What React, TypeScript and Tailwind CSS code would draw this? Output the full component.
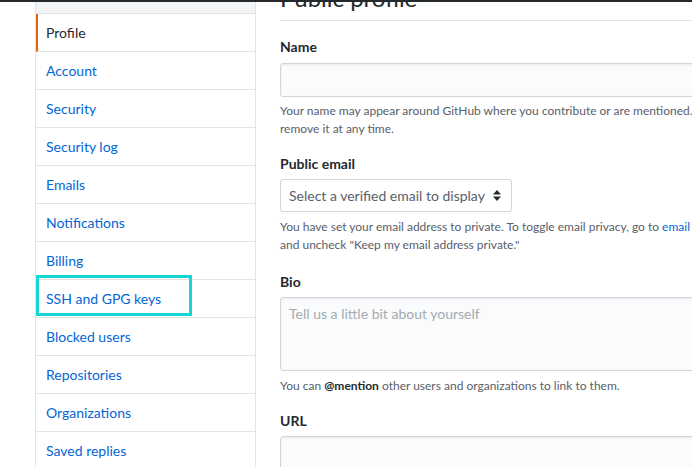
const items = [
  'Profile',
  'Account',
  'Security',
  'Security log',
  'Emails',
  'Notifications',
  'Billing',
  'SSH and GPG keys',
  'Blocked users',
  'Repositories',
  'Organizations',
  'Saved replies',
];

function Sidebar() {
  return (
    <nav className="relative w-[221px] shrink-0 border-x border-[#e1e4e8]">
      <div className="h-[12px] bg-[#f3f4f6] border-b border-[#e1e4e8]" />
      {items.map((item, i) => (
        <div
          key={item}
          className={
            i === 0
              ? 'h-[38px] pl-[8px] pr-[10px] border-l-2 border-l-[#e36209] border-b border-[#e1e4e8] text-[14px] leading-[37px] text-[#24292e]'
              : 'h-[38px] px-[10px] border-b border-[#e1e4e8] text-[14px] leading-[37px] text-[#0366d6]'
          }
        >
          {item}
        </div>
      ))}
      {/* highlight box */}
      <div className="absolute left-0 top-[273px] w-[156px] h-[41px] border-[3px] border-[#17d6d6]" />
    </nav>
  );
}

function Label({ children }: { children: React.ReactNode }) {
  return <div className="h-[21px] text-[14px] leading-[21px] font-bold text-[#24292e]">{children}</div>;
}

function Note({ children }: { children: React.ReactNode }) {
  return <div className="text-[12px] leading-[18px] text-[#586069] whitespace-nowrap">{children}</div>;
}

export default function App() {
  return (
    <div
      className="w-[692px] h-[467px] overflow-hidden bg-white"
      style={{ fontFamily: 'Lato, "Liberation Sans", sans-serif' }}
    >
      <div className="h-[2px] bg-[#24292e]" />
      <div className="flex pl-[35px]">
        <Sidebar />
        <main className="ml-[24px] w-[460px] shrink-0">
          <h2 className="-mt-[22px] pb-[4px] border-b border-[#e1e4e8] text-[24px] leading-[36px] text-[#24292e]">
            Public profile
          </h2>

          <div className="mt-[15px]">
            <Label>Name</Label>
            <div className="mt-[6px] h-[34px] rounded-[3px] border border-[#d1d5da] bg-[#fafbfc] shadow-[inset_0_1px_2px_rgba(27,31,35,0.075)]" />
            <div className="mt-[5px]">
              <Note>Your name may appear around GitHub where you contribute or are mentioned. You can</Note>
              <Note>remove it at any time.</Note>
            </div>
          </div>

          <div className="mt-[15px]">
            <Label>Public email</Label>
            <div className="mt-[5px] w-[232px] h-[33px] rounded-[3px] border border-[#d1d5da] bg-white flex items-center justify-between pl-[8px] pr-[10px]">
              <span className="text-[14px] text-[#586069]">Select a verified email to display</span>
              <svg width="8" height="11" viewBox="0 0 8 11">
                <path d="M4 0L8 4.5H0Z" fill="#24292e" />
                <path d="M4 11L8 6.5H0Z" fill="#24292e" />
              </svg>
            </div>
            <div className="mt-[6px]">
              <Note>
                You have set your email address to private. To toggle email privacy, go to{' '}
                <span className="text-[#0366d6]">email settings</span>
              </Note>
              <Note>and uncheck "Keep my email address private."</Note>
            </div>
          </div>

          <div className="mt-[17px]">
            <Label>Bio</Label>
            <div className="mt-[5px] h-[74px] rounded-[3px] border border-[#d1d5da] bg-[#fafbfc] shadow-[inset_0_1px_2px_rgba(27,31,35,0.075)] px-[8px] pt-[6px] text-[14px] leading-[20px] text-[#a4abb2]">
              Tell us a little bit about yourself
            </div>
            <div className="mt-[6px]">
              <Note>
                You can <span className="font-bold text-[#24292e]">@mention</span> other users and organizations to link to them.
              </Note>
            </div>
          </div>

          <div className="mt-[15px]">
            <Label>URL</Label>
            <div className="mt-[5px] h-[34px] rounded-[3px] border border-[#d1d5da] bg-[#fafbfc] shadow-[inset_0_1px_2px_rgba(27,31,35,0.075)]" />
          </div>
        </main>
      </div>
    </div>
  );
}
